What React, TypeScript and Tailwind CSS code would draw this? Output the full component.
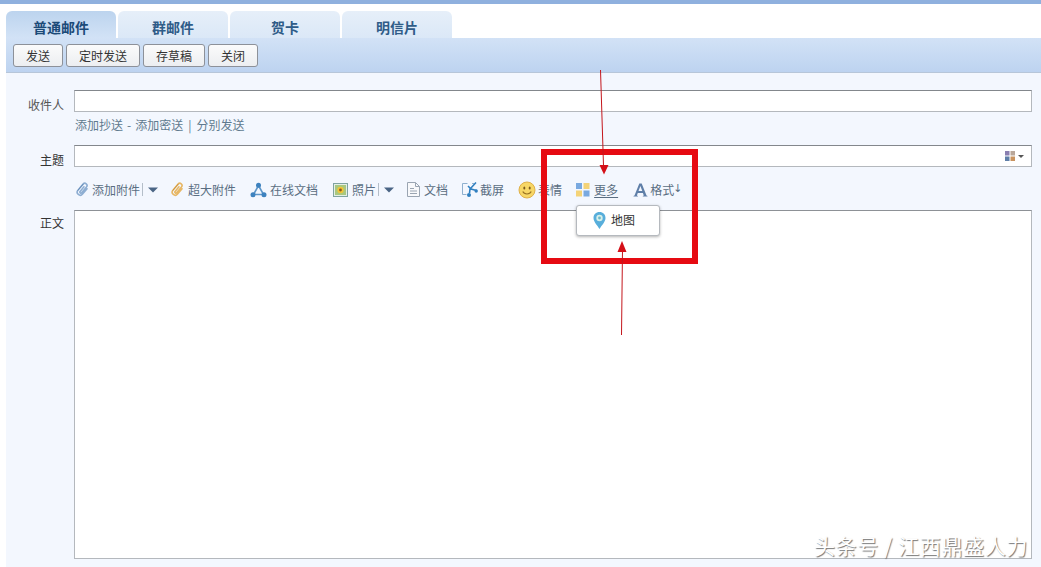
import React from "react";

const font = { fontFamily: '"Noto Sans CJK SC", "Liberation Sans", sans-serif' };

const Caret = () => (
  <svg width="10" height="6" viewBox="0 0 10 6" className="ml-[5px]"><path d="M0 0.500h10L5 5.500z" fill="#4a6585" /></svg>
);
const Sep = () => <span className="ml-[2px] h-[13px] w-px bg-[#b4bec9]" />;

const Clip = ({ c, d }: { c: string; d: string }) => (
  <svg width="15" height="15" viewBox="0 0 15 15" fill="none">
    <g transform="rotate(40 7.500 7.500)" strokeLinecap="round">
      <path d="M10.500 4v7a3 3 0 0 1-6 0V3a2.200 2.200 0 0 1 4.400 0v7.500a1 1 0 0 1-2 0V4.500" stroke={c} strokeWidth="1.600" />
      <path d="M4.500 11V3" stroke={d} strokeWidth=".8" />
    </g>
  </svg>
);

const Share = () => (
  <svg width="17" height="16" viewBox="0 0 17 16" fill="none">
    <path d="M8.500 3.500 3.500 12.500h10z" stroke="#5f97c9" strokeWidth="1.600" />
    <circle cx="8.500" cy="3.300" r="2.500" fill="#3d82bf" />
    <circle cx="3" cy="12.700" r="2.500" fill="#3d82bf" />
    <circle cx="14" cy="12.700" r="2.500" fill="#3d82bf" />
  </svg>
);

const Photo = () => (
  <svg width="15" height="14" viewBox="0 0 15 14">
    <rect x=".5" y=".5" width="14" height="13" fill="#e4efe6" stroke="#7fa3a0" />
    <rect x="2" y="2" width="11" height="10" fill="#a9c87f" />
    <circle cx="7.500" cy="7" r="3.200" fill="#f2c53a" />
    <circle cx="7.500" cy="7" r="1.400" fill="#8a5a1e" />
  </svg>
);

const Doc = () => (
  <svg width="13" height="15" viewBox="0 0 13 15" fill="none" stroke="#9aa5b2">
    <path d="M.5.500h8l4 4v10H.5z" fill="#f8f9fb" />
    <path d="M8.500.500v4h4M3 6.500h4M3 9h7M3 11.500h7" />
  </svg>
);

const Scissors = () => (
  <svg width="16" height="17" viewBox="0 0 16 17" fill="none">
    <path d="M5.500 2.500H.5v11h4M12 2.500h-2" stroke="#8fb0cf" />
    <path d="M14 1.500 8 8l-.5 4M6 5l3 3 5.500 1.500" stroke="#2f7fc0" strokeWidth="1.600" />
    <circle cx="7" cy="14" r="2" fill="#2f7fc0" />
    <circle cx="14.200" cy="10" r="1.700" fill="#2f7fc0" />
  </svg>
);

const Smile = () => (
  <svg width="18" height="18" viewBox="0 0 18 18" fill="none">
    <circle cx="9" cy="9" r="8" fill="#f7d766" stroke="#dfb04a" />
    <ellipse cx="6.300" cy="7" rx="1" ry="1.500" fill="#7a5a1c" />
    <ellipse cx="11.700" cy="7" rx="1" ry="1.500" fill="#7a5a1c" />
    <path d="M4.800 10.500c1.500 3.300 6.900 3.300 8.400 0" stroke="#9a7322" strokeWidth="1.100" />
  </svg>
);

const More = () => (
  <svg width="14" height="14" viewBox="0 0 14 14">
    <rect width="6" height="6" fill="#79a9e0" />
    <rect x="7.500" width="6" height="6" fill="#f4d377" />
    <rect y="7.500" width="6" height="6" fill="#f4d377" />
    <rect x="7.500" y="7.500" width="6" height="6" fill="#79a9e0" />
  </svg>
);

const LetterA = () => (
  <svg width="15" height="14" viewBox="0 0 15 14">
    <path d="M6.300.500h2.400L13.500 12.500l1 .5v.5H9.800V13l1-.5-.9-2.600H4.800l-.9 2.600 1 .5v.5H.5V13l1-.5zM5.500 8.100h3.800L7.400 3z" fill="#5f7fa8" fillRule="evenodd" />
  </svg>
);

const Palette = () => (
  <svg width="10" height="10" viewBox="0 0 10 10" className="shrink-0">
    <rect width="4.500" height="4.500" fill="#8a7fb0" />
    <rect x="5.500" width="4.500" height="4.500" fill="#b9a79a" />
    <rect y="5.500" width="4.500" height="4.500" fill="#5f7fa8" />
    <rect x="5.500" y="5.500" width="4.500" height="4.500" fill="#c9935f" />
  </svg>
);

const Pin = () => (
  <svg width="13" height="17" viewBox="0 0 13 17">
    <path d="M6.500 0C2.900 0 .5 2.600.5 5.900c0 3.900 4 7.500 6 11 2-3.500 6-7.100 6-11C12.500 2.600 10.100 0 6.500 0z" fill="#58aedb" />
    <circle cx="6.500" cy="6" r="3.200" fill="#d7f0ea" />
    <circle cx="6.500" cy="6" r="1.400" fill="#6cb8c9" />
  </svg>
);

const Tab = ({ label, active }: { label: string; active?: boolean }) => (
  <div
    className={
      "flex h-[27px] w-[110px] items-center justify-center rounded-t-[6px] pt-[5px] text-[14px] font-bold " +
      (active
        ? "bg-gradient-to-b from-[#bcd4ee] to-[#d2e2f6] text-[#1b4a78]"
        : "bg-gradient-to-b from-[#e6eff9] to-[#dbe8f7] font-semibold text-[#2f5c88]")
    }
  >
    {label}
  </div>
);

const Btn = ({ label, w }: { label: string; w: string }) => (
  <button className={"h-[23px] rounded-[3px] border border-[#8d9199] bg-gradient-to-b from-[#fbfbfb] to-[#eceef1] text-[12px] text-[#333] " + w}>
    {label}
  </button>
);

const Tool = ({ icon, label, className, gap = "ml-[4px]", under }: { icon: React.ReactNode; label: string; className?: string; gap?: string; under?: boolean }) => (
  <div className={"flex items-center " + (className ?? "")}>
    {icon}
    <span className={gap + " text-[12px] text-[#5a6e82] " + (under ? "underline underline-offset-2" : "")}>{label}</span>
  </div>
);

const Field = ({ children }: { children?: React.ReactNode }) => (
  <div className="flex h-[22px] flex-1 items-center justify-end border border-[#b4b8bd] border-t-[#83878c] bg-white pr-[16px]">{children}</div>
);

export default function App() {
  return (
    <div style={font} className="relative h-[567px] w-[1041px] overflow-hidden bg-white">
      <div className="h-[4px] bg-[#8fb0de]" />
      <div className="flex gap-[2px] pl-[6px] pt-[7px]">
        <Tab label="普通邮件" active />
        <Tab label="群邮件" />
        <Tab label="贺卡" />
        <Tab label="明信片" />
      </div>
      <div className="ml-[6px] flex h-[35px] gap-[3px] border-b border-[#b7c6d9] bg-gradient-to-b from-[#d2e2f6] to-[#bdd3f0] pl-[7px] pt-[6px]">
        <Btn label="发送" w="w-[50px]" />
        <Btn label="定时发送" w="w-[74px]" />
        <Btn label="存草稿" w="w-[62px]" />
        <Btn label="关闭" w="w-[50px]" />
      </div>
      <div className="ml-[6px] h-[495px] bg-[#f3f7fe] pr-[9px] pt-[17px]">
        <div className="flex items-start">
          <span className="w-[58px] pt-[6px] text-right text-[12px] text-[#555]">收件人</span>
          <div className="ml-[10px] flex flex-1"><Field /></div>
        </div>
        <div className="mt-[1px] flex h-[19px] items-center pl-[69px] text-[12px] text-[#5f7a8e]">
          <span>添加抄送</span>
          <span className="ml-[4px]">-</span>
          <span className="ml-[4px]">添加密送</span>
          <span className="ml-[5px]">|</span>
          <span className="ml-[5px]">分别发送</span>
        </div>
        <div className="mt-[11px] flex items-start">
          <span className="w-[58px] pt-[6px] text-right text-[12px] text-[#333]">主题</span>
          <div className="ml-[10px] flex flex-1">
            <Field>
              <Palette />
              <span className="absolute right-[17px] top-[155px] h-0 w-0 border-x-[3px] border-t-[3px] border-x-transparent border-t-[#555]" />
            </Field>
          </div>
        </div>
        <div className="mt-[11px] flex h-[19px] items-center pl-[69px]">
          <Clip c="#8eaed2" d="#5f86b3" />
          <span className="ml-[2px] text-[12px] text-[#5a6e82]">添加附件</span>
          <Sep />
          <Caret />
          <Tool className="ml-[12px]" gap="ml-[3px]" icon={<Clip c="#e7b765" d="#c68f3a" />} label="超大附件" />
          <Tool className="ml-[14px]" gap="ml-[3px]" icon={<Share />} label="在线文档" />
          <Tool className="ml-[15px]" icon={<Photo />} label="照片" />
          <Sep />
          <Caret />
          <Tool className="ml-[13px]" gap="ml-[4px]" icon={<Doc />} label="文档" />
          <Tool className="ml-[14px]" gap="ml-[2px]" icon={<Scissors />} label="截屏" />
          <Tool className="ml-[14px]" gap="ml-[2px]" icon={<Smile />} label="表情" />
          <Tool className="ml-[14px]" gap="ml-[4px]" icon={<More />} label="更多" under />
          <Tool className="ml-[15px]" gap="ml-[2px]" icon={<LetterA />} label="格式" />
          <span className="ml-[-1px] text-[11px] text-[#5a6e82]" style={{ fontFamily: '"DejaVu Sans", sans-serif' }}>↓</span>
        </div>
        <div className="mt-[11px] flex">
          <span className="w-[58px] pt-[4px] text-right text-[12px] text-[#333]">正文</span>
          <div className="ml-[10px] h-[349px] flex-1 border border-[#b4b8bd] border-t-[#8d9196] bg-white" />
        </div>
      </div>

      <div className="absolute left-[576px] top-[205px] flex h-[31px] w-[84px] items-center rounded-[3px] border border-[#b5b9be] bg-white pb-[1px] pl-[16px] text-[12px] text-[#333] shadow-[0_1px_3px_rgba(0,0,0,0.3)]">
        <Pin />
        <span className="ml-[5px]">地图</span>
      </div>

      <div className="absolute left-[541px] top-[149px] h-[115px] w-[157px] border-[6px] border-[#e60a12]" />

      <svg className="absolute left-[590px] top-[70px]" width="45" height="270" viewBox="0 0 45 270" fill="none">
        <path d="M10.500 0 13.500 96" stroke="#c4161c" />
        <path d="M9.500 95h9l-4.500 9.500z" fill="#d40f18" />
        <path d="M32.500 180 31.500 265" stroke="#c4161c" />
        <path d="M27.500 182h9l-4.500-11z" fill="#d40f18" />
      </svg>

      <div className="absolute left-[814px] top-[531px] text-[21px] leading-[28px] tracking-[0.6px] text-white [text-shadow:1px_1px_1px_#777]">
        头条号 / 江西鼎盛人力
      </div>
    </div>
  );
}
